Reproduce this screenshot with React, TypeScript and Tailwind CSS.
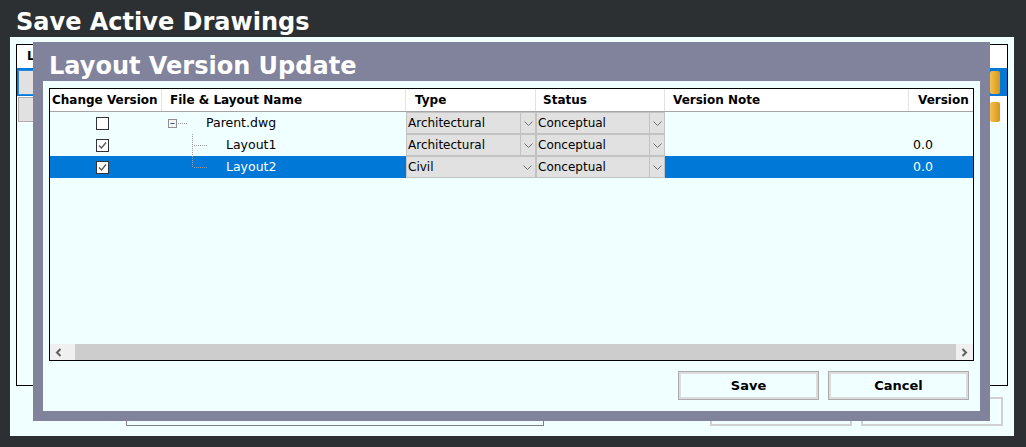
import clsx from "clsx";

const cols = [112, 244, 130, 129, 244, 64];

function ChevronDown() {
  return (
    <svg width="9" height="5" viewBox="0 0 9 5">
      <path d="M0.5 0.5 L4.5 4.5 L8.5 0.5" fill="none" stroke="#707070" strokeWidth="1" />
    </svg>
  );
}

function ScrollArrow({ dir }: { dir: "left" | "right" }) {
  return (
    <svg width="7" height="9" viewBox="0 0 7 9">
      <path
        d={dir === "left" ? "M5.5 1 L2 4.5 L5.5 8" : "M1.5 1 L5 4.5 L1.5 8"}
        fill="none"
        stroke="#606060"
        strokeWidth="2"
      />
    </svg>
  );
}

function Combo({ text, split = true }: { text: string; split?: boolean }) {
  return (
    <div className="flex h-[22px] w-full border border-[#c2c2c2] bg-[#e1e1e1] text-[12px] text-black">
      <div className="flex-1 pl-[1px] leading-[21px]">{text}</div>
      <div
        className={clsx(
          "flex w-[15px] items-center justify-center",
          split && "border-l border-[#c2c2c2]"
        )}
      >
        <ChevronDown />
      </div>
    </div>
  );
}

function CheckBox({ checked }: { checked: boolean }) {
  return (
    <svg width="13" height="13" viewBox="0 0 13 13">
      <rect x="0.5" y="0.5" width="12" height="12" fill="#ffffff" stroke="#333333" />
      {checked && (
        <path d="M3 6.5 L5.5 9 L10 3.5" fill="none" stroke="#555555" strokeWidth="1.3" />
      )}
    </svg>
  );
}

// dotted connectors of the tree column
function TreeLines({ kind }: { kind: "root" | "mid" | "last" }) {
  const w = kind === "root" ? 44 : 48;
  return (
    <svg width={w} height="22" viewBox={`0 0 ${w} 22`} className="shrink-0">
      {kind === "root" && (
        <>
          <rect x="6.5" y="7.5" width="8" height="8" fill="#f4f4f4" stroke="#8f8f8f" />
          <line x1="8.5" y1="11.5" x2="12.5" y2="11.5" stroke="#2c4f9e" />
          <line x1="16" y1="11.5" x2="26" y2="11.5" stroke="#9a9a9a" strokeDasharray="1 1" />
        </>
      )}
      {kind !== "root" && (
        <>
          <line
            x1="30.5"
            y1="0"
            x2="30.5"
            y2={kind === "mid" ? 22 : 11}
            stroke="#9a9a9a"
            strokeDasharray="1 1"
          />
          <line x1="32" y1="11.5" x2="46" y2="11.5" stroke="#9a9a9a" strokeDasharray="1 1" />
        </>
      )}
    </svg>
  );
}

type Row = {
  checked: boolean;
  tree: "root" | "mid" | "last";
  name: string;
  type: string;
  typeSplit: boolean;
  status: string;
  version: string;
  selected?: boolean;
};

const rows: Row[] = [
  { checked: false, tree: "root", name: "Parent.dwg", type: "Architectural", typeSplit: true, status: "Conceptual", version: "" },
  { checked: true, tree: "mid", name: "Layout1", type: "Architectural", typeSplit: true, status: "Conceptual", version: "0.0" },
  { checked: true, tree: "last", name: "Layout2", type: "Civil", typeSplit: false, status: "Conceptual", version: "0.0", selected: true },
];

const headers = [
  { label: "Change Version", pad: "pl-[2px]" },
  { label: "File & Layout Name", pad: "pl-[8px]" },
  { label: "Type", pad: "pl-[9px]" },
  { label: "Status", pad: "pl-[7px]" },
  { label: "Version Note", pad: "pl-[8px]" },
  { label: "Version", pad: "pl-[9px]" },
];

function DialogButton({ label, className }: { label: string; className?: string }) {
  return (
    <button
      className={clsx(
        "h-[29px] w-[141px] border border-[#ababab] bg-[#f0ffff] text-[13px] font-bold text-black shadow-[inset_0_0_0_2px_#dcdcdc]",
        className
      )}
    >
      {label}
    </button>
  );
}

function LayoutVersionDialog() {
  return (
    <div className="absolute left-[33px] top-[42px] flex h-[379px] w-[957px] flex-col bg-[#81829c] px-[10px] pb-[10px]">
      <div className="h-[39px] pl-[6px] pt-[10px] text-[24px] font-bold leading-[28px] text-white">
        Layout Version Update
      </div>
      <div className="flex flex-1 flex-col bg-[#f0ffff] px-[6px] pt-[7px]">
        <div className="flex h-[273px] flex-col border border-black bg-[#f0ffff]">
          <div className="flex h-[23px] border-b border-[#a5a5a5] bg-white">
            {headers.map((h, i) => (
              <div
                key={h.label}
                style={{ width: cols[i] }}
                className={clsx(
                  "text-[12px] font-bold leading-[23px] text-black",
                  h.pad,
                  i < 5 && "border-r border-[#e3e3e3]"
                )}
              >
                {h.label}
              </div>
            ))}
          </div>
          {rows.map((r) => (
            <div
              key={r.name}
              className={clsx(
                "flex h-[22px] text-[12.5px] leading-[22px]",
                r.selected ? "bg-[#0078d7] text-white" : "text-black"
              )}
            >
              <div style={{ width: cols[0] }} className="flex items-center pl-[46px]">
                <CheckBox checked={r.checked} />
              </div>
              <div style={{ width: cols[1] }} className="flex">
                <TreeLines kind={r.tree} />
                <span className={r.tree === "root" ? "" : "pl-[16px]"}>{r.name}</span>
              </div>
              <div style={{ width: cols[2] }}>
                <Combo text={r.type} split={r.typeSplit} />
              </div>
              <div style={{ width: cols[3] }}>
                <Combo text={r.status} />
              </div>
              <div style={{ width: cols[4] }} />
              <div style={{ width: cols[5] }} className="pl-[4px]">
                {r.version}
              </div>
            </div>
          ))}
          <div className="flex-1" />
          <div className="flex h-[16px]">
            <div className="flex w-[25px] items-center pl-[5px] bg-[#f0f0f0]">
              <ScrollArrow dir="left" />
            </div>
            <div className="flex-1 bg-[#cdcdcd]" />
            <div className="flex w-[17px] items-center justify-center bg-[#f0f0f0]">
              <ScrollArrow dir="right" />
            </div>
          </div>
        </div>
        <div className="mt-[10px] flex justify-end gap-[9px] pr-[5px]">
          <DialogButton label="Save" />
          <DialogButton label="Cancel" />
        </div>
      </div>
    </div>
  );
}

function SaveActiveDrawings() {
  return (
    <div className="ml-[10px] flex h-[399px] w-[1004px] flex-col bg-[#f0ffff] pl-[6px] pr-[6px] pt-[7px]">
      <div className="flex h-[342px] flex-col border border-black">
        <div className="flex h-[23px] bg-white pl-[10px] text-[12px] font-bold leading-[22px] text-black">
          L
        </div>
        <div className="flex h-[28px] items-center justify-between bg-[#0078d7] pl-[1px] pr-[7px]">
          <div className="h-[25px] w-[16px] border border-[#2a8ae0] bg-[#e1e1e1]" />
          <div className="h-[23px] w-[10px] rounded-[2px] bg-gradient-to-r from-[#f2c14e] to-[#d9950f]" />
        </div>
        <div className="flex h-[27px] items-start justify-between bg-white pl-[1px] pr-[7px] pt-[1px]">
          <div className="h-[25px] w-[16px] border border-[#adadad] bg-[#e1e1e1]" />
          <div className="mt-[5px] h-[20px] w-[10px] rounded-[2px] bg-gradient-to-r from-[#f2c14e] to-[#d9950f]" />
        </div>
        <div className="flex-1" />
      </div>
      <div className="flex items-start pt-[11px]">
        <div className="ml-[110px] mt-[4px] h-[25px] w-[418px] border border-[#808080]" />
        <div className="ml-auto flex gap-[9px] pr-[5px]">
          <button className="h-[29px] w-[142px] border-2 border-[#d0d0d0] bg-[#f0ffff]" />
          <button className="h-[29px] w-[142px] border-2 border-[#d0d0d0] bg-[#f0ffff]" />
        </div>
      </div>
    </div>
  );
}

export default function App() {
  return (
    <div className="relative h-[447px] w-[1026px] overflow-hidden bg-[#2c3032] font-['DejaVu_Sans',sans-serif]">
      <h1 className="h-[37px] pl-[16px] pt-[8px] text-[24px] font-bold leading-[28px] text-white">
        Save Active Drawings
      </h1>
      <SaveActiveDrawings />
      <LayoutVersionDialog />
    </div>
  );
}
